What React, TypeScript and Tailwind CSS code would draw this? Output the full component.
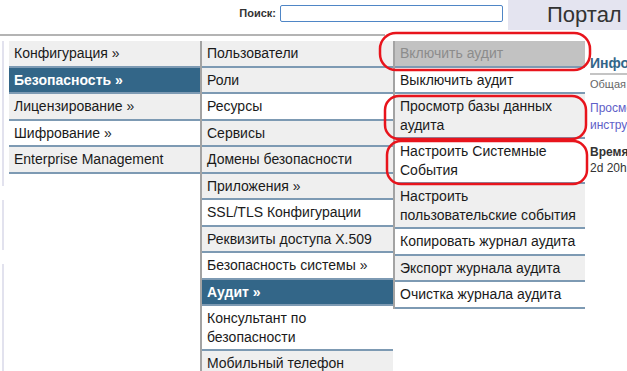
import React from "react";

type Item = { label: string; bg?: "gray" | "white" | "sel" | "off" };

const col1: Item[] = [
  { label: "Конфигурация »", bg: "gray" },
  { label: "Безопасность »", bg: "sel" },
  { label: "Лицензирование »", bg: "gray" },
  { label: "Шифрование »", bg: "white" },
  { label: "Enterprise Management", bg: "gray" },
];

const col2: Item[] = [
  { label: "Пользователи", bg: "gray" },
  { label: "Роли", bg: "gray" },
  { label: "Ресурсы", bg: "white" },
  { label: "Сервисы", bg: "gray" },
  { label: "Домены безопасности", bg: "gray" },
  { label: "Приложения »", bg: "gray" },
  { label: "SSL/TLS Конфигурации", bg: "white" },
  { label: "Реквизиты доступа X.509", bg: "gray" },
  { label: "Безопасность системы »", bg: "white" },
  { label: "Аудит »", bg: "sel" },
  { label: "Консультант по безопасности", bg: "white" },
  { label: "Мобильный телефон", bg: "gray" },
];

const col3: Item[] = [
  { label: "Включить аудит", bg: "off" },
  { label: "Выключить аудит", bg: "white" },
  { label: "Просмотр базы данных аудита", bg: "gray" },
  { label: "Настроить Системные События", bg: "white" },
  { label: "Настроить пользовательские события", bg: "gray" },
  { label: "Копировать журнал аудита", bg: "white" },
  { label: "Экспорт журнала аудита", bg: "gray" },
  { label: "Очистка журнала аудита", bg: "white" },
];

const rowCls = (bg?: Item["bg"]) => {
  if (bg === "sel") return "bg-[#336688] text-white font-bold";
  if (bg === "off") return "bg-[#c2c2c2] text-[#8c8c8c]";
  if (bg === "gray") return "bg-[#efefef] text-[#1a1a1a]";
  return "bg-white text-[#1a1a1a]";
};

const MenuCol = ({ items, className }: { items: Item[]; className: string }) => (
  <div className={className}>
    {items.map((it) => (
      <div
        key={it.label}
        className={`px-[5px] py-[3px] leading-[18.5px] text-[14px] border-b-2 border-[#7d9ab3] ${rowCls(it.bg)}`}
      >
        {it.label}
      </div>
    ))}
  </div>
);

export default function App() {
  return (
    <div className="relative w-[627px] h-[371px] overflow-hidden bg-white font-['Liberation_Sans',Arial,sans-serif]">
      {/* header */}
      <div className="flex h-[34px] items-start">
        <div className="flex flex-1 items-center justify-end gap-[4px] pt-[5px] pr-[5px]">
          <span className="text-[11px] font-bold text-[#333]">Поиск:</span>
          <input className="w-[223px] h-[17px] border border-[#4f86c6] rounded-[2px] bg-white outline-none" />
        </div>
        <div className="w-[119px] h-[30px] bg-[#e4e4f0] pl-[39px] text-[22px] leading-[30px] text-[#333]">
          Портал
        </div>
      </div>

      {/* body */}
      <div className="flex">
        <div className="w-[587px] shrink-0">
          <div className="w-[385px] h-[2px] bg-[#b4b4b4]" />
          <div className="flex items-start mt-[5px]">
            <div className="w-[2px] ml-[2px] mr-[5px] self-stretch flex flex-col gap-[14px]">
              <div className="h-[145px] bg-[#e2e2ee]" />
              <div className="h-[50px] bg-[#e2e2ee]" />
              <div className="flex-1 bg-[#e2e2ee]" />
            </div>
            <MenuCol items={col1} className="w-[191px]" />
            <MenuCol items={col2} className="w-[193px] border-l-2 border-[#a3a3a3]" />
            <MenuCol items={col3} className="w-[192px] border-l-2 border-[#a3a3a3]" />
          </div>
        </div>
        <div className="flex-1 pt-[20px] pl-[3px] whitespace-nowrap overflow-hidden">
          <div className="text-[14px] font-bold text-[#336688] leading-[18px] border-b-2 border-[#c4c4c4] pb-[1px]">
            Информация
          </div>
          <div className="text-[11px] text-[#666] leading-[14px] mt-[2px]">Общая</div>
          <div className="text-[12px] text-[#6060c8] leading-[17px] mt-[9px]">
            Просмотр
            <br />
            инструкций
          </div>
          <div className="text-[12px] text-[#333] leading-[16px] mt-[10px]">
            <span className="font-bold">Время</span>
            <br />
            2d 20h
          </div>
        </div>
      </div>

      {/* annotation marks */}
      <svg className="absolute inset-0 pointer-events-none" width="627" height="371">
        <rect x="380" y="33" width="210" height="37" rx="16" fill="none" stroke="#e8141c" strokeWidth="2.5" />
        <rect x="385" y="96" width="201" height="43" rx="14" fill="none" stroke="#e8141c" strokeWidth="2.5" />
        <rect x="387" y="141" width="200" height="43" rx="14" fill="none" stroke="#e8141c" strokeWidth="2.5" />
      </svg>
    </div>
  );
}
